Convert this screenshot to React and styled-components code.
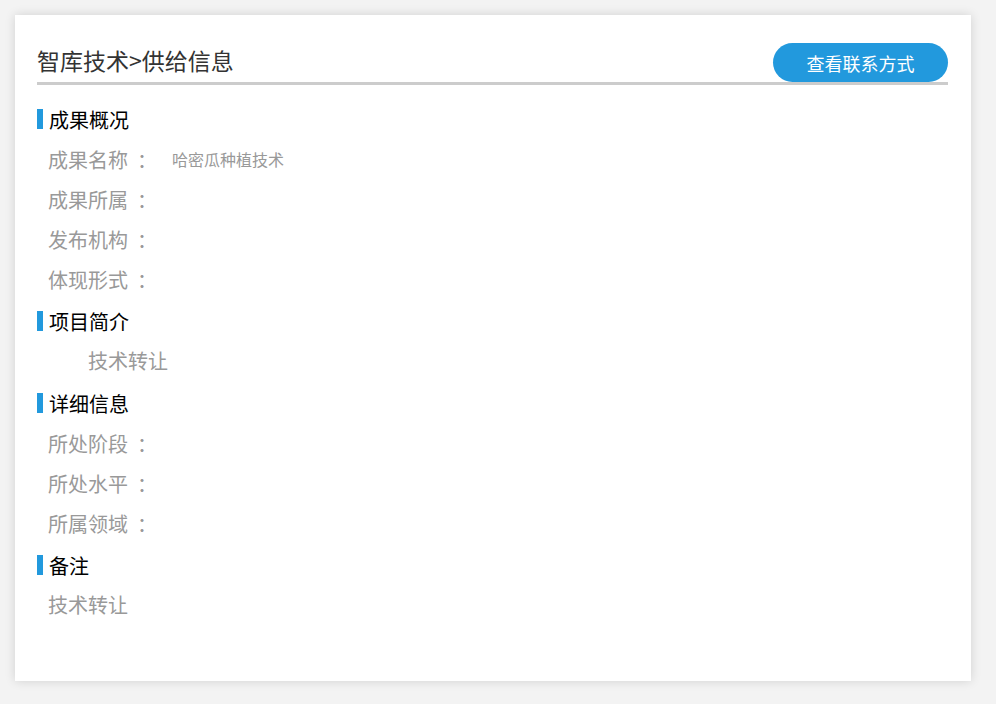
import React from 'react'
import styled, { createGlobalStyle } from 'styled-components'

const GlobalStyle = createGlobalStyle`
  html, body {
    margin: 0;
    padding: 0;
    background: #f3f3f3;
    font-family: "Noto Sans CJK SC", "Noto Sans", sans-serif;
  }
`

const sections = [
  {
    title: '成果概况',
    rows: [
      { label: '成果名称', value: '哈密瓜种植技术' },
      { label: '成果所属', value: '' },
      { label: '发布机构', value: '' },
      { label: '体现形式', value: '' },
    ],
  },
  { title: '项目简介', text: '技术转让', indent: true },
  {
    title: '详细信息',
    rows: [
      { label: '所处阶段', value: '' },
      { label: '所处水平', value: '' },
      { label: '所属领域', value: '' },
    ],
  },
  { title: '备注', text: '技术转让' },
]

const App = () => {
  return (
    <Page>
      <GlobalStyle />
      <Card>
        <Header>
          <Title>智库技术&gt;供给信息</Title>
          <ContactButton>查看联系方式</ContactButton>
        </Header>

        {sections.map(({ title, rows, text, indent }, i) => (
          <Section key={title} first={i === 0}>
            <SectionTitle>{title}</SectionTitle>
            {rows &&
              rows.map(({ label, value }) => (
                <Row key={label}>
                  <Label>{label}</Label>
                  <Colon>：</Colon>
                  <Value>{value}</Value>
                </Row>
              ))}
            {text && <Paragraph indent={indent}>{text}</Paragraph>}
          </Section>
        ))}
      </Card>
    </Page>
  )
}

export default App

const Page = styled.div`
  padding: 15px;
`

const Card = styled.div`
  width: 956px;
  height: 666px;
  box-sizing: border-box;
  background: #fff;
  box-shadow: 0 0 10px rgba(0, 0, 0, 0.14);
  padding: 28px 23px 55px 22px;
`

const Header = styled.div`
  display: flex;
  justify-content: space-between;
  align-items: flex-start;
  border-bottom: 3px solid #cccccc;
`

const Title = styled.h1`
  margin: 0;
  font-size: 23px;
  font-weight: normal;
  line-height: 34px;
  color: #333;
`

const ContactButton = styled.button`
  width: 175px;
  height: 39px;
  border: none;
  border-radius: 20px;
  background: #2299dd;
  color: #fff;
  font-family: inherit;
  font-size: 18px;
  cursor: pointer;
`

const Section = styled.div`
  margin-top: ${({ first }) => (first ? '14px' : '2px')};
`

const SectionTitle = styled.h2`
  display: flex;
  align-items: center;
  margin: 0;
  height: 40px;
  font-size: 20px;
  font-weight: normal;
  color: #000;

  &::before {
    content: '';
    width: 6px;
    height: 20px;
    margin-right: 6px;
    background: #2299dd;
  }
`

const Row = styled.div`
  display: flex;
  align-items: center;
  height: 40px;
  padding-left: 11px;
  color: #999;
`

const Label = styled.span`
  font-size: 20px;
`

const Colon = styled.span`
  font-size: 20px;
  margin-left: 9px;
`

const Value = styled.span`
  font-size: 16px;
  margin-left: 15px;
`

const Paragraph = styled.p`
  margin: 0;
  line-height: 40px;
  padding-left: 11px;
  font-size: 20px;
  color: #999;
  text-indent: ${({ indent }) => (indent ? '2em' : '0')};
`
